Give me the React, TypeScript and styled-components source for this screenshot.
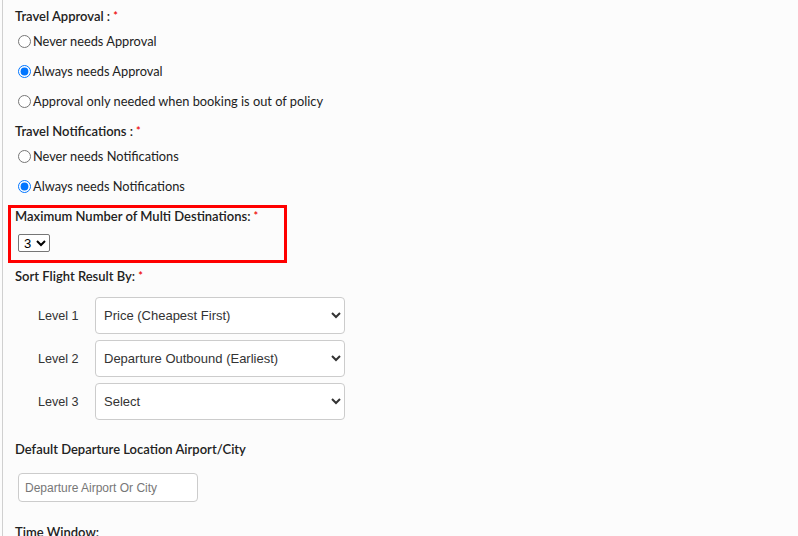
import styled, {createGlobalStyle} from "styled-components";

const GlobalStyle = createGlobalStyle`
    body {
        margin: 0;
        background: #fcfcfc;
        font-family: Lato, "Liberation Sans", sans-serif;
        color: #222;
    }
`

const PageStyle = styled.div`
    margin-left: 2px;
    border-left: 1px solid #d0d0d0;
    padding: 6px 0 0 12px;
    min-height: 600px;
    box-sizing: border-box;
`

const LabelStyle = styled.div<{$top?: number}>`
    font-size: 13px;
    font-weight: 600;
    line-height: 20px;
    height: 20px;
    margin-top: ${(props) => props.$top ?? 0}px;
    color: #222;
`

const StarStyle = styled.span`
    color: #e00;
    font-size: 11px;
    margin-left: 3px;
    vertical-align: top;
`

const RadioRowStyle = styled.label`
    display: flex;
    align-items: center;
    height: 30px;
    font-size: 12.8px;
    color: #222;

    input {
        margin: 0 2px 0 3px;
        width: 13px;
        height: 13px;
    }
`

const HighlightStyle = styled.div`
    margin: 4px 0 0 -7px;
    width: 279px;
    box-sizing: border-box;
    border: 3px solid #ff0000;
    padding: 0 0 8px 4px;

    ${LabelStyle} {
        line-height: 16px;
        height: 16px;
    }
`

const SmallSelectStyle = styled.select`
    display: block;
    margin: 10px 0 0 3px;
    width: 32px;
    height: 18px;
    font-family: "Liberation Sans", Arial, sans-serif;
    font-size: 13px;
    padding: 0 0 0 1px;
    border: 1px solid #767676;
    border-radius: 2px;
    background: #fff;
    color: #000;
`

const LevelListStyle = styled.div`
    display: flex;
    flex-direction: column;
    gap: 6px;
    margin-top: 11px;
`

const LevelRowStyle = styled.div`
    display: flex;
    align-items: center;
    padding-left: 23px;
`

const LevelLabelStyle = styled.span`
    width: 57px;
    font-family: "Liberation Sans", Arial, sans-serif;
    font-size: 12.6px;
    color: #333;
`

const LevelSelectStyle = styled.select`
    width: 250px;
    height: 37px;
    padding: 0 4px;
    font-family: "Liberation Sans", Arial, sans-serif;
    font-size: 13px;
    color: #333;
    background: #fff;
    border: 1px solid #ccc;
    border-radius: 4px;
`

const InputStyle = styled.input`
    display: block;
    margin: 14px 0 0 3px;
    width: 180px;
    height: 29px;
    box-sizing: border-box;
    padding: 0 6px;
    border: 1px solid #ccc;
    border-radius: 4px;
    background: #fff;
    font-family: "Liberation Sans", Arial, sans-serif;
    font-size: 12px;

    &::placeholder {
        color: #777;
    }
`

function Required() {
    return <StarStyle>*</StarStyle>;
}

export default function App() {
    return (
        <>
            <GlobalStyle/>
            <PageStyle>
                <LabelStyle>Travel Approval :<Required/></LabelStyle>
                <RadioRowStyle><input type="radio" name="approval"/>Never needs Approval</RadioRowStyle>
                <RadioRowStyle><input type="radio" name="approval" defaultChecked/>Always needs Approval</RadioRowStyle>
                <RadioRowStyle><input type="radio" name="approval"/>Approval only needed when booking is out of policy</RadioRowStyle>

                <LabelStyle $top={5}>Travel Notifications :<Required/></LabelStyle>
                <RadioRowStyle><input type="radio" name="notify"/>Never needs Notifications</RadioRowStyle>
                <RadioRowStyle><input type="radio" name="notify" defaultChecked/>Always needs Notifications</RadioRowStyle>

                <HighlightStyle>
                    <LabelStyle>Maximum Number of Multi Destinations:<Required/></LabelStyle>
                    <SmallSelectStyle defaultValue="3">
                        <option>1</option>
                        <option>2</option>
                        <option>3</option>
                        <option>4</option>
                        <option>5</option>
                    </SmallSelectStyle>
                </HighlightStyle>

                <LabelStyle $top={3}>Sort Flight Result By:<Required/></LabelStyle>
                <LevelListStyle>
                    <LevelRowStyle>
                        <LevelLabelStyle>Level 1</LevelLabelStyle>
                        <LevelSelectStyle defaultValue="price">
                            <option value="">Select</option>
                            <option value="price">Price (Cheapest First)</option>
                            <option value="dep">Departure Outbound (Earliest)</option>
                        </LevelSelectStyle>
                    </LevelRowStyle>
                    <LevelRowStyle>
                        <LevelLabelStyle>Level 2</LevelLabelStyle>
                        <LevelSelectStyle defaultValue="dep">
                            <option value="">Select</option>
                            <option value="price">Price (Cheapest First)</option>
                            <option value="dep">Departure Outbound (Earliest)</option>
                        </LevelSelectStyle>
                    </LevelRowStyle>
                    <LevelRowStyle>
                        <LevelLabelStyle>Level 3</LevelLabelStyle>
                        <LevelSelectStyle defaultValue="">
                            <option value="">Select</option>
                            <option value="price">Price (Cheapest First)</option>
                            <option value="dep">Departure Outbound (Earliest)</option>
                        </LevelSelectStyle>
                    </LevelRowStyle>
                </LevelListStyle>

                <LabelStyle $top={19}>Default Departure Location Airport/City</LabelStyle>
                <InputStyle placeholder="Departure Airport Or City"/>

                <LabelStyle $top={20}>Time Window:</LabelStyle>
            </PageStyle>
        </>
    );
}
